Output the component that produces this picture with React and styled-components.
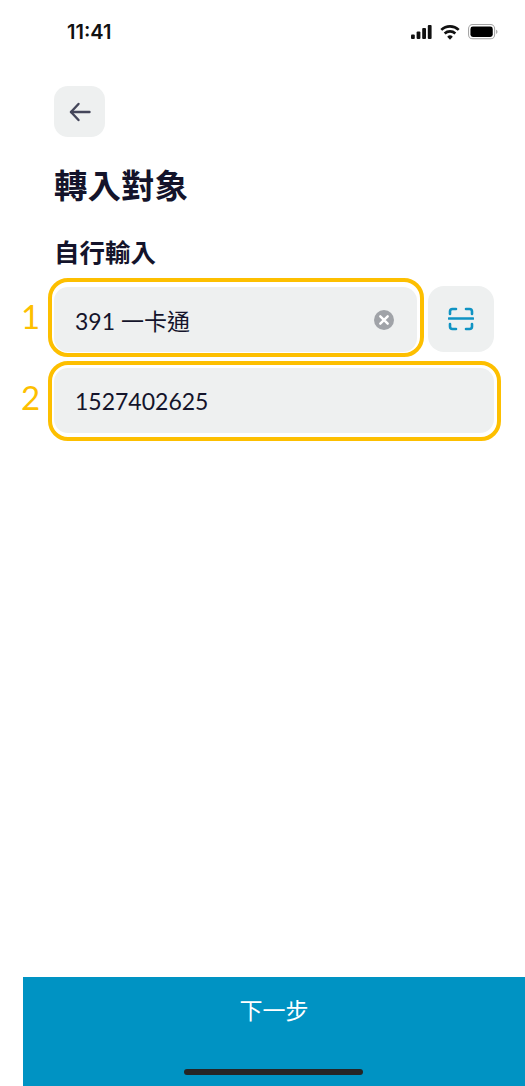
import React from "react";
import styled, { createGlobalStyle } from "styled-components";

const GlobalStyle = createGlobalStyle`
  html, body {
    margin: 0;
    padding: 0;
    background: #fff;
  }
  body {
    font-family: Lato, "Noto Sans CJK TC", sans-serif;
    color: #14142b;
  }
`;

const Page = styled.div`
  width: 525px;
  height: 1086px;
  display: flex;
  flex-direction: column;
  overflow: hidden;
`;
const StatusBar = styled.div`
  height: 62px;
  padding: 20px 27px 0 67px;
  box-sizing: border-box;
  display: flex;
  justify-content: space-between;
  align-items: flex-start;
`;
const Time = styled.div`
  font-family: Inter, sans-serif;
  font-size: 20px;
  line-height: 24px;
  font-weight: 600;
  color: #111;
`;
const StatusIcons = styled.div`
  display: flex;
  align-items: center;
  gap: 8px;
  height: 24px;
`;
const Content = styled.div`
  flex: 1;
  padding: 24px 31px 0 54px;
`;
const BackButton = styled.div`
  width: 51px;
  height: 51px;
  border-radius: 14px;
  background: #eef0f0;
  display: flex;
  align-items: center;
  justify-content: center;
`;
const Title = styled.h1`
  margin: 24px 0 0;
  font-size: 33.5px;
  line-height: 48px;
  font-weight: 700;
`;
const SubTitle = styled.h2`
  margin: 25px 0 0;
  font-size: 25.5px;
  line-height: 36px;
  font-weight: 700;
`;
const Row = styled.div`
  display: flex;
  gap: 11px;
  margin-top: 17px;
`;
const Field = styled.div`
  position: relative;
  flex: 1;
  height: 65px;
  margin-top: ${props => props.$top || 0}px;
  padding: 0 23px 0 21px;
  box-sizing: border-box;
  border-radius: 14px;
  background: #eef0f0;
  display: flex;
  align-items: center;
  justify-content: space-between;
  font-size: 23px;
`;
const ScanButton = styled.div`
  width: 66px;
  height: 66px;
  margin-top: -1px;
  border-radius: 16px;
  background: #eef0f0;
  display: flex;
  align-items: center;
  justify-content: center;
`;
const Highlight = styled.div`
  position: absolute;
  left: -6px;
  right: -7px;
  top: ${props => props.$top}px;
  bottom: ${props => props.$bottom}px;
  border: 4px solid #fdbf00;
  border-radius: 20px;
  pointer-events: none;
`;
const Marker = styled.span`
  position: absolute;
  left: -33px;
  top: 6px;
  font-size: 33px;
  line-height: 46px;
  color: #fdbf00;
`;
const NextButton = styled.div`
  position: relative;
  margin-left: 23px;
  height: 109px;
  padding-top: 13px;
  box-sizing: border-box;
  background: #0093c3;
  color: #fff;
  font-size: 23px;
  line-height: 40px;
  display: flex;
  justify-content: center;
`;
const HomeBar = styled.div`
  position: absolute;
  left: 161px;
  bottom: 11px;
  width: 179px;
  height: 6px;
  border-radius: 3px;
  background: #252525;
`;

const Signal = () => (
  <svg width="21" height="14" viewBox="0 0 21 14" fill="#111">
    <rect x="0" y="9.500" width="3.800" height="4.500" rx="1" />
    <rect x="5.600" y="6.500" width="3.800" height="7.500" rx="1" />
    <rect x="11.200" y="3" width="3.800" height="11" rx="1" />
    <rect x="16.800" y="0" width="3.800" height="14" rx="1" />
  </svg>
);
const Wifi = () => (
  <svg width="20" height="15" viewBox="0 0 21 16" fill="none" stroke="#111" strokeWidth="2.800">
    <path d="M1.200 5.200a13.500 13.500 0 0 1 18.600 0" />
    <path d="M4.800 9a8.400 8.400 0 0 1 11.400 0" />
    <path d="M10.500 15.600l-3-3.200a4.400 4.400 0 0 1 6 0z" fill="#111" stroke="none" />
  </svg>
);
const Battery = () => (
  <svg width="30" height="16" viewBox="0 0 32 17" fill="none">
    <rect x="0.600" y="0.600" width="27.800" height="15.200" rx="4.400" stroke="#a3a3a3" strokeWidth="1.100" />
    <rect x="2.600" y="2.600" width="23.800" height="11.200" rx="2.600" fill="#000" />
    <path d="M30 6v4.600c.9-.3 1.400-1.300 1.400-2.300S30.900 6.300 30 6z" fill="#a3a3a3" />
  </svg>
);
const BackArrow = () => (
  <svg width="22" height="20" viewBox="0 0 22 20" fill="none" stroke="#44465a" strokeWidth="2.400" strokeLinecap="round" strokeLinejoin="round">
    <path d="M20.500 10H2" />
    <path d="M9.500 2L2 10l7.500 8" />
  </svg>
);
const ClearIcon = () => (
  <svg width="20" height="20" viewBox="0 0 20 20" fill="none">
    <circle cx="10" cy="10" r="10" fill="#a0a3a8" />
    <path d="M6.300 6.300l7.400 7.400M13.700 6.300l-7.400 7.400" stroke="#fff" strokeWidth="2.400" strokeLinecap="round" />
  </svg>
);
const ScanIcon = () => (
  <svg width="26" height="24" viewBox="0 0 26 24" fill="none" stroke="#0f93c3" strokeWidth="2.600" strokeLinecap="round">
    <path d="M2 7V4.500A2.500 2.500 0 0 1 4.500 2H8" />
    <path d="M18 2h3.500A2.500 2.500 0 0 1 24 4.500V7" />
    <path d="M2 17v2.500A2.500 2.500 0 0 0 4.500 22H8" />
    <path d="M18 22h3.500a2.500 2.500 0 0 0 2.500-2.500V17" />
    <path d="M1 11.500h24" />
  </svg>
);

export default function App() {
  return (
    <Page>
      <GlobalStyle />
      <StatusBar>
        <Time>11:41</Time>
        <StatusIcons>
          <Signal />
          <Wifi />
          <Battery />
        </StatusIcons>
      </StatusBar>
      <Content>
        <BackButton>
          <BackArrow />
        </BackButton>
        <Title>轉入對象</Title>
        <SubTitle>自行輸入</SubTitle>
        <Row>
          <Field>
            <span>391 一卡通</span>
            <ClearIcon />
            <Highlight $top={-9} $bottom={-5} />
            <Marker>1</Marker>
          </Field>
          <ScanButton>
            <ScanIcon />
          </ScanButton>
        </Row>
        <Field $top={16}>
          <span>1527402625</span>
          <Highlight $top={-7} $bottom={-8} />
          <Marker>2</Marker>
        </Field>
      </Content>
      <NextButton>
        下一步
        <HomeBar />
      </NextButton>
    </Page>
  );
}
